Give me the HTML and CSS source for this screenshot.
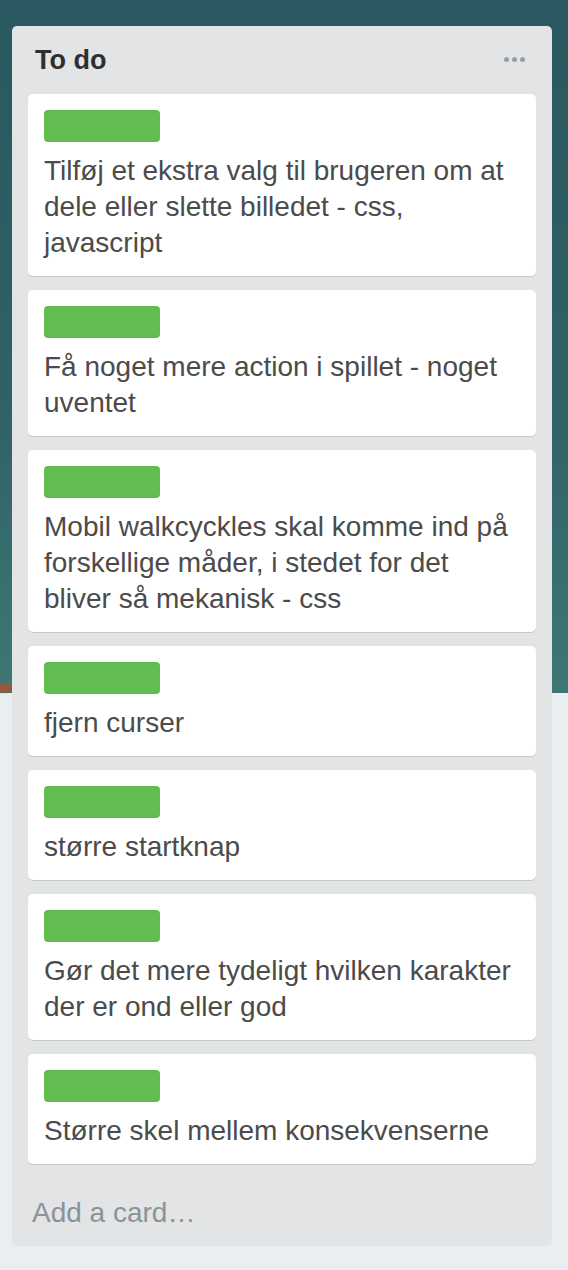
FILE: index.html
```html
<!DOCTYPE html>
<html lang="da">
<head>
<meta charset="utf-8">
<title>To do</title>
<link rel="stylesheet" href="styles.css">
</head>
<body>
<div class="board">
  <section class="list">
    <header class="list-header">
      <h2 class="list-title">To do</h2>
      <span class="menu" aria-label="menu"><i></i><i></i><i></i></span>
    </header>
    <div class="cards">
      <article class="card"><div class="label"></div><p class="card-text">Tilføj et ekstra valg til brugeren om at<br>dele eller slette billedet - css,<br>javascript</p></article>
      <article class="card"><div class="label"></div><p class="card-text">Få noget mere action i spillet - noget<br>uventet</p></article>
      <article class="card"><div class="label"></div><p class="card-text">Mobil walkcyckles skal komme ind på<br>forskellige måder, i stedet for det<br>bliver så mekanisk - css</p></article>
      <article class="card"><div class="label"></div><p class="card-text">fjern curser</p></article>
      <article class="card"><div class="label"></div><p class="card-text">større startknap</p></article>
      <article class="card"><div class="label"></div><p class="card-text">Gør det mere tydeligt hvilken karakter<br>der er ond eller god</p></article>
      <article class="card"><div class="label"></div><p class="card-text">Større skel mellem konsekvenserne</p></article>
    </div>
    <footer class="add-card">Add a card…</footer>
  </section>
</div>
</body>
</html>
```
FILE: styles.css
```css
* { box-sizing: border-box; }
html, body { margin: 0; padding: 0; }
body {
  width: 568px;
  height: 1270px;
  font-family: "Liberation Sans", Arial, Helvetica, sans-serif;
  background:
    radial-gradient(ellipse 14px 6px at 4px 688px, #b0502a 0%, rgba(176,80,42,0.6) 60%, rgba(176,80,42,0) 100%) no-repeat,
    linear-gradient(to bottom, #2a5860 0px, #2f6166 400px, #3f7775 693px, #e9eef0 693px, #e9eef0 100%) no-repeat;
  overflow: hidden;
}
.board {
  padding: 26px 16px 0 12px;
}
.list {
  width: 540px;
  background: #e2e4e6;
  border-radius: 5px;
  padding: 0 16px;
}
.list-header {
  display: flex;
  justify-content: space-between;
  align-items: flex-start;
  padding: 18px 7px 0 7px;
  height: 68px;
}
.list-title {
  margin: 0;
  font-size: 27px;
  line-height: 32px;
  font-weight: bold;
  color: #2f2f2f;
}
.menu {
  display: flex;
  gap: 3px;
  margin-top: 13px;
  margin-right: 4px;
}
.menu i {
  display: block;
  width: 5px;
  height: 5px;
  border-radius: 50%;
  background: #979ea2;
}
.cards {
  display: flex;
  flex-direction: column;
  gap: 14px;
}
.card {
  background: #fff;
  border-radius: 5px;
  box-shadow: 0 1px 0 #c4c9cc;
  padding: 16px 8px 15px 16px;
}
.label {
  width: 116px;
  height: 32px;
  border-radius: 4px;
  background: #61bd4f;
  margin-bottom: 11px;
}
.card-text {
  margin: 0;
  font-size: 28px;
  line-height: 36px;
  color: #4b4b4b;
  white-space: nowrap;
}
.add-card {
  margin-top: 14px;
  padding: 17px 4px 15px 4px;
  font-size: 28px;
  line-height: 36px;
  color: #8b9396;
}
```
